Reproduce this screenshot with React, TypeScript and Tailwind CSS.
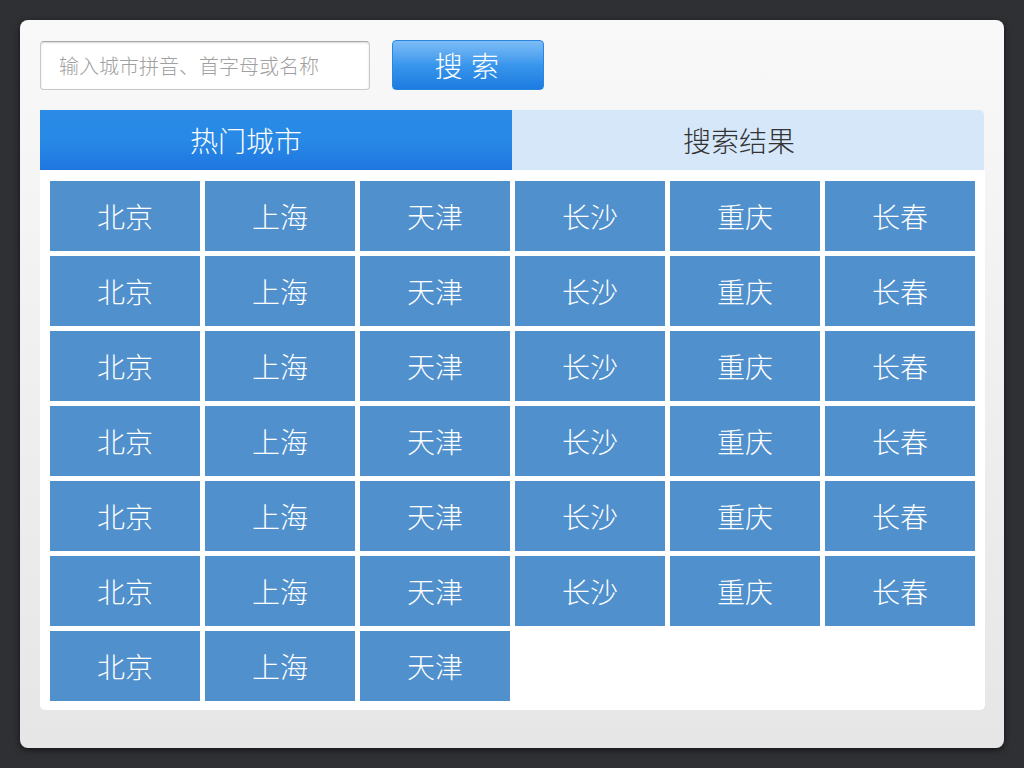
import { useState } from 'react';

const F = { fontFamily: "'Noto Sans CJK SC', 'Noto Sans', sans-serif" } as const;

const row = ['北京', '上海', '天津', '长沙', '重庆', '长春'];
const cities = [...row, ...row, ...row, ...row, ...row, ...row, '北京', '上海', '天津'];

export default function App() {
  const [tab, setTab] = useState(0);

  return (
    <div className="w-[1024px] h-[768px] bg-[#2f3034] p-5" style={F}>
      <div className="h-[728px] rounded-lg bg-gradient-to-b from-[#f9f9f9] to-[#e6e6e6] shadow-[0_2px_6px_rgba(0,0,0,0.6)] px-5 pt-5">
        {/* search bar */}
        <div className="flex items-center gap-[22px] h-[50px]">
          <input
            className="w-[330px] h-[49px] mt-[1px] rounded-[4px] bg-white border border-[#c8c8c8] border-t-[#a8a8a8] shadow-[inset_0_1px_2px_rgba(0,0,0,0.15)] px-[18px] text-[20px] font-light text-[#444] placeholder:text-[#a0a0a0] outline-none"
            style={F}
            placeholder="输入城市拼音、首字母或名称"
          />
          <button
            className="w-[152px] h-[50px] rounded-[4px] border border-[#2a86e0] bg-gradient-to-b from-[#7cbdf6] via-[#3996ec] to-[#1b7be0] text-white text-[28px] font-light tracking-[0.3em] pl-[6px] leading-none"
            style={F}
          >
            搜索
          </button>
        </div>

        {/* tabs */}
        <div className="mt-5 w-[944px] flex h-[60px]">
          <button
            onClick={() => setTab(0)}
            className={
              tab === 0
                ? 'w-[472px] shrink-0 pr-[60px] bg-gradient-to-b from-[#2a8ae6] via-[#2889e6] to-[#1f76e0] text-white text-[28px] font-light'
                : 'w-[472px] shrink-0 pr-[60px] bg-[#d5e7f8] text-[#333] text-[28px] font-light'
            }
            style={F}
          >
            热门城市
          </button>
          <button
            onClick={() => setTab(1)}
            className={
              tab === 1
                ? 'w-[472px] shrink-0 pr-[18px] rounded-tr-[5px] bg-gradient-to-b from-[#2a8ae6] via-[#2889e6] to-[#1f76e0] text-white text-[28px] font-light'
                : 'w-[472px] shrink-0 pr-[18px] rounded-tr-[5px] bg-[#d5e7f8] text-[#333] text-[28px] font-light'
            }
            style={F}
          >
            搜索结果
          </button>
        </div>

        {/* city grid */}
        <div className="w-[945px] h-[540px] bg-white rounded-b-[5px] pl-[10px] pt-[11px]">
          {tab === 0 && (
            <div className="grid grid-cols-[repeat(6,150px)] auto-rows-[70px] gap-[5px]">
              {cities.map((c, i) => (
                <div
                  key={i}
                  className="bg-[#5090cd] text-white text-[28px] font-light flex items-center justify-center"
                >
                  {c}
                </div>
              ))}
            </div>
          )}
        </div>
      </div>
    </div>
  );
}
